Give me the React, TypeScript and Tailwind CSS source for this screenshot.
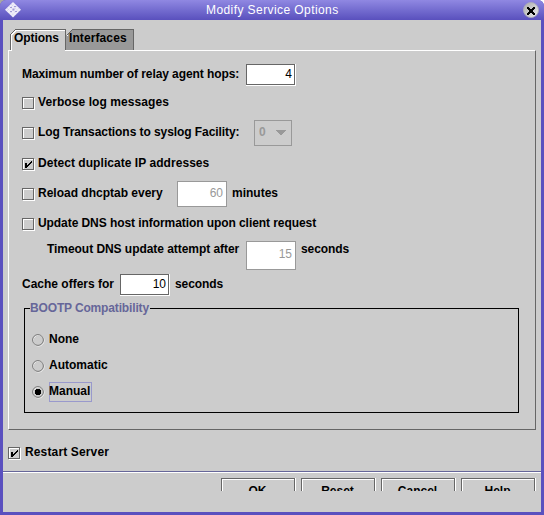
import React from "react";

function Label({ children, className = "" }: { children: React.ReactNode; className?: string }) {
  return <span className={`block shrink-0 whitespace-pre text-[12px] leading-[14px] font-bold ${className}`}>{children}</span>;
}

function Check({ on = false, className = "" }: { on?: boolean; className?: string }) {
  return (
    <svg width="13" height="13" shapeRendering="crispEdges" fill="none" className={`shrink-0 ${className}`}>
      <rect x="1.5" y="1.5" width="11" height="11" stroke="#fff" />
      <rect x="0.5" y="0.5" width="11" height="11" stroke="#666" />
      {on && <path d="M3 5h2v5H3zM5 7h1v2H5zM6 6h1v2H6zM7 5h1v2H7zM8 4h1v2H8zM9 3h1v2H9z" fill="#000" />}
    </svg>
  );
}

function Field({ value }: { value: string }) {
  return (
    <div className="h-[22px] w-[50px] shrink-0 border-r border-b border-white">
      <div className="h-[21px] w-[49px] border border-[#666] bg-white pt-[2px] pr-[2px] text-right text-[12px] leading-[14px]">{value}</div>
    </div>
  );
}

function Radio({ on = false }: { on?: boolean }) {
  return (
    <svg width="13" height="13" viewBox="0 0 13 13" fill="none" className="mt-[2px] shrink-0">
      <circle cx="6.5" cy="6.5" r="5.5" stroke="#fff" />
      <circle cx="6" cy="6" r="5.4" stroke="#666" strokeWidth="0.9" />
      {on && <path d="M4 3h4v1h1v4H8v1H4V8H3V4h1z" fill="#000" shapeRendering="crispEdges" />}
    </svg>
  );
}

function ActionButton({ children }: { children: string }) {
  return (
    <div className="h-[26px] w-[75px] shrink-0 border-r border-white">
      <div className="h-[26px] border border-[#666]">
        <div className="flex h-[25px] justify-center border-t border-l border-white pt-[4px] pr-[2px]">
          <Label>{children}</Label>
        </div>
      </div>
    </div>
  );
}

export default function App() {
  return (
    <div className="h-[515px] w-[544px] overflow-hidden bg-[linear-gradient(90deg,#a8a8a0_50%,#fff_50%)] font-['Liberation_Sans',Arial,sans-serif] text-black">
      <div className="flex h-[515px] flex-col rounded-t-[6px] bg-[#5a50bf]">
        <header className="flex h-[20px] shrink-0 items-start rounded-t-[6px] bg-linear-to-b from-[#9088e2] to-[#5a50bd] pl-[5px]">
          <svg width="17" height="17" viewBox="0 0 17 17" className="mt-px shrink-0">
            <path d="M8 1 16 8.7 8 16.5 0 8.7z" fill="#efedfa" />
            <path d="M4 5l8 8M2 7l8 8M6 3l8 8M4 13l8-8M2 10l8-8M6 15l8-8" stroke="#c8c4e4" strokeWidth=".6" strokeDasharray="1 1" />
            <path d="M7.5 7.5h2v2h-2zM5 6h2v1H5zM9 5h2v1H9zM5 10h2v1H5zM10 10h2v1h-2z" fill="#a29cd6" />
          </svg>
          <h1 className="ml-[184px] w-[140px] shrink-0 pt-[3px] text-[12px] leading-[14px] font-normal tracking-[0.42px] whitespace-nowrap text-white">Modify Service Options</h1>
          <svg width="17" height="17" viewBox="0 0 17 17" className="mt-[2px] ml-[177px] shrink-0">
            <defs>
              <linearGradient id="closeFace" x1="0" y1="0" x2="1" y2="1">
                <stop stopColor="#aaa" /><stop offset="1" stopColor="#eee" />
              </linearGradient>
            </defs>
            <circle cx="8" cy="8" r="7.5" fill="url(#closeFace)" stroke="#a9a9bd" />
            <path d="M4 5h2v1h1v1h2V6h1V5h2v2h-1v1h-1v2h1v1h1v2h-2v-1H9v-1H7v1H6v1H4v-2h1v-1h1V8H5V7H4z" fill="#000" shapeRendering="crispEdges" />
          </svg>
        </header>

        <main className="mx-[3px] h-[492px] shrink-0 bg-[#ccc] pt-[9px]">
          <nav className="relative ml-[5px] flex h-[21px]">
            <svg width="130" height="22" fill="none" shapeRendering="crispEdges" className="absolute top-0 left-0 z-10">
              <path d="M3 22V6L8 1H57V22z" fill="#ccc" />
              <path d="M58 22V6L64 0H126V21H58z" fill="#999" />
              <path d="M58.5 6.5L64.5.5H125.5V21M2.5 21V5.5L7.5.5H57.5V21" stroke="#666" />
              <path d="M0 21.5H3.5V6L8 1.5H57M59 7L64.5 1.5H125M58 21.5H130" stroke="#fff" />
              <path d="M59.5 6.5L64.5 1.5H125" stroke="#999" />
            </svg>
            <Label className="relative z-20 ml-[6px] w-[55px] pt-[2px] tracking-[-0.08px]">Options</Label>
            <Label className="relative z-20 pt-[2px] tracking-[0.1px]">Interfaces</Label>
          </nav>

          <section className="ml-[5px] h-[380px] w-[528px] border border-t-white border-r-[#666] border-b-[#666] border-l-white pt-[13px] pl-[13px]">
            <div className="flex h-[22px]">
              <Label className="mt-[3px] w-[224px] tracking-[-0.08px]">Maximum number of relay agent hops:</Label>
              <Field value="4" />
            </div>
            <div className="mt-[9px] flex h-[14px]">
              <Check className="mt-[2px]" />
              <Label className="ml-[3px] tracking-[0.08px]">Verbose log messages</Label>
            </div>
            <div className="mt-[11px] flex h-[26px]">
              <Check className="mt-[7px]" />
              <Label className="mt-[5px] ml-[3px] w-[216px] tracking-[-0.07px]">Log Transactions to syslog Facility:</Label>
              <div className="flex h-[26px] w-[38px] items-start border border-[#999] pl-[4px] text-[#999]">
                <Label className="mt-[4px]">0</Label>
                <svg width="10" height="5" shapeRendering="crispEdges" className="mt-[9px] ml-[10px]">
                  <path d="M0 0h10v1H9v1H8v1H7v1H6v1H4V4H3V3H2V2H1V1H0z" fill="#999" />
                </svg>
              </div>
            </div>
            <div className="mt-[10px] flex h-[14px]">
              <Check on className="mt-[2px]" />
              <Label className="ml-[3px] tracking-[0.05px]">Detect duplicate IP addresses</Label>
            </div>
            <div className="mt-[11px] flex h-[26px]">
              <Check className="mt-[7px]" />
              <Label className="mt-[5px] ml-[3px] w-[139px]">Reload dhcptab every</Label>
              <div className="h-[26px] w-[50px] border border-[#999] bg-white pt-[4px] pr-[3px] text-right text-[12px] leading-[14px] text-[#999]">60</div>
              <Label className="mt-[5px] ml-[5px]">minutes</Label>
            </div>
            <div className="mt-[9px] flex h-[14px]">
              <Check className="mt-[2px]" />
              <Label className="ml-[3px] tracking-[-0.07px]">Update DNS host information upon client request</Label>
            </div>
            <div className="mt-[11px] flex h-[29px] pl-[25px]">
              <Label className="mt-px w-[199px] tracking-[-0.05px]">Timeout DNS update attempt after</Label>
              <div className="h-[29px] w-[50px] border border-[#999] bg-white pt-[5px] pr-[3px] text-right text-[12px] leading-[14px] text-[#999]">15</div>
              <Label className="mt-px ml-[5px] tracking-[-0.08px]">seconds</Label>
            </div>
            <div className="mt-[4px] flex h-[22px]">
              <Label className="mt-[3px] w-[98px]">Cache offers for</Label>
              <Field value="10" />
              <Label className="mt-[3px] ml-[5px] tracking-[-0.08px]">seconds</Label>
            </div>
            <div className="mt-[12px] ml-[2px] h-[105px] w-[495px] border border-black pl-[7px]">
              <Label className="-mt-[8px] -ml-[2px] w-[120px] bg-[#ccc] tracking-[-0.15px] text-[#669]">BOOTP Compatibility</Label>
              <div className="mt-[17px] flex h-[26px]">
                <Radio /><Label className="ml-[4px]">None</Label>
              </div>
              <div className="flex h-[26px]">
                <Radio /><Label className="ml-[4px]">Automatic</Label>
              </div>
              <div className="flex h-[18px]">
                <Radio on />
                <div className="-mt-[2px] ml-[4px] h-[20px] w-[43px] border border-[#99c]">
                  <Label className="-ml-px pt-px">Manual</Label>
                </div>
              </div>
            </div>
          </section>

          <div className="mt-[15px] ml-[5px] flex h-[26px]">
            <Check on className="mt-[2px]" />
            <Label className="ml-[4px] tracking-[0.14px]">Restart Server</Label>
          </div>
          <div className="h-[2px] border-t border-b border-t-[#669] border-b-white" />
          <footer className="mt-[5px] flex h-[13px] gap-[5px] overflow-hidden pl-[218px]">
            <ActionButton>OK</ActionButton>
            <ActionButton>Reset</ActionButton>
            <ActionButton>Cancel</ActionButton>
            <ActionButton>Help</ActionButton>
          </footer>
        </main>
      </div>
    </div>
  );
}
